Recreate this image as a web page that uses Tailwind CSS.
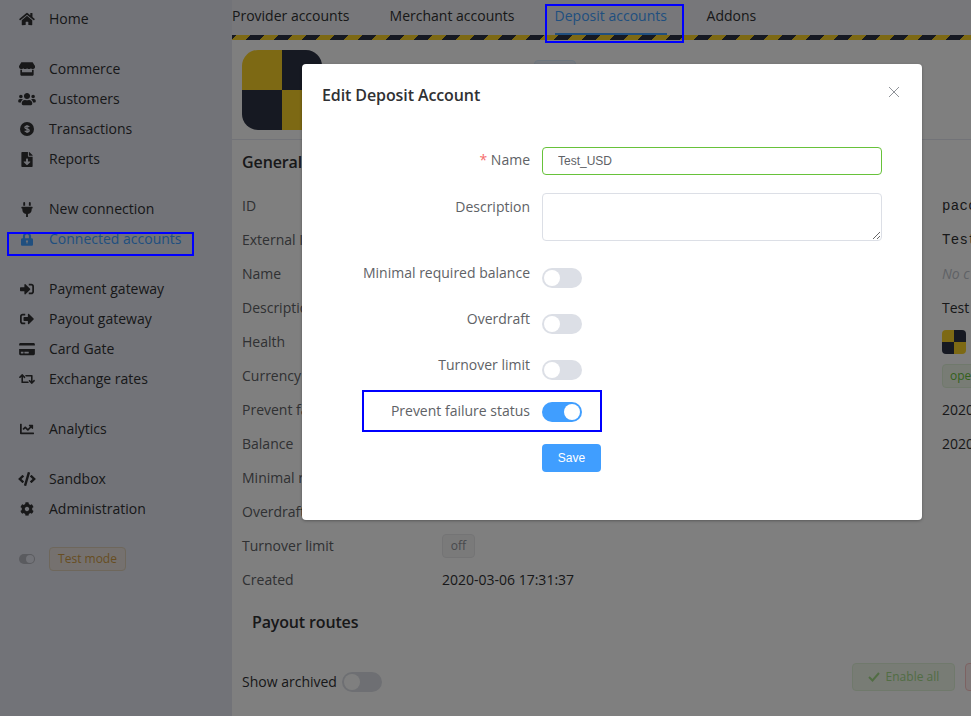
<!DOCTYPE html>
<html lang="en">
<head>
    <meta charset="UTF-8">
    <meta name="viewport" content="width=device-width, initial-scale=1.0">
    <title>Edit Deposit Account</title>
    <script src="https://cdn.jsdelivr.net/npm/@tailwindcss/browser@4"></script>
</head>
<body class="relative h-screen overflow-hidden bg-white font-['Open_Sans',sans-serif] text-sm text-[#606266]">

    <div class="flex h-full">
        <!-- sidebar -->
        <aside class="w-[232px] shrink-0 bg-[#e4e6f0] pt-1 text-[#303133]">
            <a class="flex h-[30px] items-center"><span class="flex w-[49px] justify-center pl-[5px]"><svg class="h-[14px] w-4 fill-current" viewBox="0 0 576 512"><path d="M280.37 148.26L96 300.11V464a16 16 0 0 0 16 16l112.06-.29a16 16 0 0 0 15.92-16V368a16 16 0 0 1 16-16h64a16 16 0 0 1 16 16v95.64a16 16 0 0 0 16 16.05L464 480a16 16 0 0 0 16-16V300L295.67 148.26a12.19 12.19 0 0 0-15.3 0zM571.6 251.47L488 182.56V44.05a12 12 0 0 0-12-12h-56a12 12 0 0 0-12 12v72.61L318.47 43a48 48 0 0 0-61 0L4.34 251.47a12 12 0 0 0-1.6 16.9l25.5 31A12 12 0 0 0 45.15 301l235.22-193.74a12.19 12.19 0 0 1 15.3 0L530.9 301a12 12 0 0 0 16.9-1.6l25.5-31a12 12 0 0 0-1.7-16.93z"/></svg></span>Home</a>

            <a class="mt-5 flex h-[30px] items-center"><span class="flex w-[49px] justify-center pl-[5px]"><svg class="h-[14px] w-4 fill-current" viewBox="0 0 616 512"><path d="M602 118.6L537.1 15C531.3 5.7 521 0 510 0H106C95 0 84.7 5.7 78.9 15L14 118.6c-33.9 54.1-3.9 129.3 59.4 137.9 4.6.6 9.2.9 13.7.9 29.9 0 56.4-13.1 74.6-33.4 18.2 20.3 44.8 33.4 74.6 33.4 29.9 0 56.4-13.1 74.6-33.4 18.2 20.3 44.8 33.4 74.6 33.4 29.9 0 56.4-13.1 74.6-33.4 18.3 20.3 44.8 33.4 74.6 33.4 4.6 0 9.1-.3 13.7-.9 63.5-8.5 93.6-83.7 59.6-137.9zM529.5 288c-10 0-19.9-1.5-29.5-3.8V384H116v-99.8c-9.6 2.2-19.5 3.8-29.5 3.8-6 0-12.1-.4-18-1.2-5.6-.8-11.1-2.1-16.4-3.6V480c0 17.7 14.3 32 32 32h448c17.7 0 32-14.3 32-32V283.2c-5.4 1.6-10.8 2.9-16.4 3.6-6.1.8-12.1 1.2-18.2 1.2z"/></svg></span>Commerce</a>
            <a class="flex h-[30px] items-center"><span class="flex w-[49px] justify-center pl-[5px]"><svg class="h-[14px] w-[18px] fill-current" viewBox="0 0 640 512"><path d="M96 224c35.3 0 64-28.7 64-64s-28.7-64-64-64-64 28.7-64 64 28.7 64 64 64zm448 0c35.3 0 64-28.7 64-64s-28.7-64-64-64-64 28.7-64 64 28.7 64 64 64zm32 32h-64c-17.6 0-33.5 7.1-45.1 18.6 40.3 22.1 68.9 62 75.1 109.4h66c17.7 0 32-14.3 32-32v-32c0-35.3-28.7-64-64-64zm-256 0c61.9 0 112-50.1 112-112S381.9 32 320 32 208 82.1 208 144s50.1 112 112 112zm76.8 32h-8.3c-20.8 10-43.9 16-68.5 16s-47.6-6-68.5-16h-8.3C179.6 288 128 339.6 128 403.2V432c0 26.5 21.5 48 48 48h288c26.5 0 48-21.5 48-48v-28.8c0-63.6-51.6-115.2-115.2-115.2zm-223.7-13.4C161.5 263.1 145.6 256 128 256H64c-35.3 0-64 28.7-64 64v32c0 17.7 14.3 32 32 32h65.9c6.3-47.4 34.9-87.3 75.2-109.4z"/></svg></span>Customers</a>
            <a class="flex h-[30px] items-center"><span class="flex w-[49px] justify-center pl-[5px]"><svg class="h-[14px] w-[14px]" viewBox="0 0 14 14"><circle class="fill-current" cx="7" cy="7" r="7"/><path d="M9.2 5.1C8.9 4.4 8.1 4.1 7 4.1c-1.2 0-2.1.5-2.1 1.4 0 2 4.3 1 4.3 3 0 .9-.9 1.4-2.2 1.4-1.1 0-1.9-.4-2.2-1.1M7 2.9v8.2" fill="none" stroke="#e4e6f0" stroke-width="1.3"/></svg></span>Transactions</a>
            <a class="flex h-[30px] items-center"><span class="flex w-[49px] justify-center pl-[5px]"><svg class="h-[15px] w-3 fill-current" viewBox="0 0 384 512"><path d="M224 136V0H24C10.7 0 0 10.7 0 24v464c0 13.3 10.7 24 24 24h336c13.3 0 24-10.7 24-24V160H248c-13.2 0-24-10.8-24-24zm76.45 211.36l-96.42 95.7c-6.65 6.61-17.39 6.61-24.04 0l-96.42-95.7C73.42 337.29 80.54 320 94.82 320H160v-80c0-8.84 7.16-16 16-16h32c8.84 0 16 7.16 16 16v80h65.18c14.28 0 21.4 17.29 11.27 27.36zM377 105L279.1 7c-4.5-4.5-10.6-7-17-7H256v128h128v-6.1c0-6.3-2.5-12.4-7-16.9z"/></svg></span>Reports</a>

            <a class="mt-5 flex h-[30px] items-center"><span class="flex w-[49px] justify-center pl-[5px]"><svg class="h-[15px] w-3 fill-current" viewBox="0 0 384 512"><path d="M320,32a32,32,0,0,0-64,0v96h64Zm48,128H16A16,16,0,0,0,0,176v32a16,16,0,0,0,16,16H32v32A160.07,160.07,0,0,0,160,412.8V512h64V412.8A160.07,160.07,0,0,0,352,256V224h16a16,16,0,0,0,16-16V176A16,16,0,0,0,368,160ZM128,32a32,32,0,0,0-64,0v96h64Z"/></svg></span>New connection</a>
            <a class="flex h-[30px] items-center text-[#409eff]"><span class="flex w-[49px] justify-center pl-[5px]"><svg class="h-[14px] w-3 fill-current" viewBox="0 0 448 512"><path fill-rule="evenodd" d="M400 224h-24v-72C376 68.2 307.8 0 224 0S72 68.2 72 152v72H48c-26.5 0-48 21.5-48 48v192c0 26.5 21.5 48 48 48h352c26.5 0 48-21.5 48-48V272c0-26.5-21.5-48-48-48zm-104 0H152v-72c0-39.7 32.3-72 72-72s72 32.3 72 72v72zM224 300a40 40 0 0 0-20 74.6V420h40v-45.4A40 40 0 0 0 224 300z"/></svg></span>Connected accounts</a>

            <a class="mt-5 flex h-[30px] items-center"><span class="flex w-[49px] justify-center pl-[5px]"><svg class="h-[14px] w-[14px] fill-current" viewBox="0 0 512 512"><path d="M416 448h-84c-6.6 0-12-5.4-12-12v-40c0-6.6 5.4-12 12-12h84c17.7 0 32-14.3 32-32V160c0-17.7-14.3-32-32-32h-84c-6.6 0-12-5.4-12-12V76c0-6.6 5.4-12 12-12h84c53 0 96 43 96 96v192c0 53-43 96-96 96zm-47-201L201 79c-15-15-41-4.5-41 17v96H24c-13.3 0-24 10.7-24 24v96c0 13.3 10.7 24 24 24h136v96c0 21.5 26 32 41 17l168-168c9.3-9.4 9.3-24.6 0-34z"/></svg></span>Payment gateway</a>
            <a class="flex h-[30px] items-center"><span class="flex w-[49px] justify-center pl-[5px]"><svg class="h-[14px] w-[14px] fill-current" viewBox="0 0 512 512"><path d="M497 273L329 441c-15 15-41 4.5-41-17v-96H152c-13.3 0-24-10.7-24-24v-96c0-13.3 10.7-24 24-24h136V88c0-21.4 25.9-32 41-17l168 168c9.3 9.4 9.3 24.6 0 34zM192 436v-40c0-6.6-5.4-12-12-12H96c-17.7 0-32-14.3-32-32V160c0-17.7 14.3-32 32-32h84c6.6 0 12-5.4 12-12V76c0-6.6-5.4-12-12-12H96c-53 0-96 43-96 96v192c0 53 43 96 96 96h84c6.6 0 12-5.4 12-12z"/></svg></span>Payout gateway</a>
            <a class="flex h-[30px] items-center"><span class="flex w-[49px] justify-center pl-[5px]"><svg class="h-[14px] w-4 fill-current" viewBox="0 0 576 512"><path d="M0 432c0 26.5 21.5 48 48 48h480c26.5 0 48-21.5 48-48V256H0v176zm192-68c0-6.6 5.4-12 12-12h136c6.6 0 12 5.4 12 12v40c0 6.6-5.4 12-12 12H204c-6.6 0-12-5.4-12-12v-40zm-128 0c0-6.6 5.4-12 12-12h72c6.6 0 12 5.4 12 12v40c0 6.6-5.4 12-12 12H76c-6.6 0-12-5.4-12-12v-40zM576 80v48H0V80c0-26.5 21.5-48 48-48h480c26.5 0 48 21.5 48 48z"/></svg></span>Card Gate</a>
            <a class="flex h-[30px] items-center"><span class="flex w-[49px] justify-center pl-[5px]"><svg class="h-[14px] w-4 fill-current" viewBox="0 0 640 512"><path d="M629.657 343.598L528.971 444.284c-9.373 9.372-24.568 9.372-33.941 0L394.343 343.598c-9.373-9.373-9.373-24.569 0-33.941l10.823-10.823c9.562-9.562 25.133-9.34 34.419.492L480 342.118V160H292.451a24.005 24.005 0 0 1-16.971-7.029l-16-16C244.361 121.851 255.069 96 276.451 96H520c13.255 0 24 10.745 24 24v222.118l40.416-43.792c9.285-9.831 24.856-10.054 34.419-.492l10.823 10.823c9.372 9.372 9.372 24.569-.001 33.941zm-265.138 15.431A23.999 23.999 0 0 0 347.548 352H160V169.881l40.416 43.792c9.286 9.831 24.856 10.054 34.419.491l10.822-10.822c9.373-9.373 9.373-24.569 0-33.941L144.971 67.716c-9.373-9.373-24.569-9.373-33.941 0L10.343 168.402c-9.373 9.373-9.373 24.569 0 33.941l10.822 10.822c9.562 9.562 25.133 9.34 34.419-.491L96 169.881V392c0 13.255 10.745 24 24 24h243.549c21.382 0 32.09-25.851 16.971-40.971l-16.001-16z"/></svg></span>Exchange rates</a>

            <a class="mt-5 flex h-[30px] items-center"><span class="flex w-[49px] justify-center pl-[5px]"><svg class="h-[14px] w-[14px] fill-current" viewBox="0 0 512 512"><path d="M496 384H64V80c0-8.84-7.16-16-16-16H16C7.16 64 0 71.16 0 80v336c0 17.67 14.33 32 32 32h464c8.84 0 16-7.16 16-16v-32c0-8.84-7.16-16-16-16zM464 96H345.94c-21.38 0-32.09 25.85-16.97 40.97l32.4 32.4L288 242.75l-73.37-73.37c-12.5-12.5-32.76-12.5-45.25 0l-68.69 68.69c-6.25 6.25-6.25 16.38 0 22.63l22.62 22.62c6.25 6.25 16.38 6.25 22.63 0L192 237.25l73.37 73.37c12.5 12.5 32.76 12.5 45.25 0l96-96 32.4 32.4c15.12 15.12 40.97 4.41 40.97-16.97V112c.01-8.84-7.15-16-15.99-16z"/></svg></span>Analytics</a>

            <a class="mt-5 flex h-[30px] items-center"><span class="flex w-[49px] justify-center pl-[5px]"><svg class="h-[14px] w-[18px] fill-current" viewBox="0 0 640 512"><path d="M278.9 511.5l-61-17.7c-6.4-1.8-10-8.5-8.2-14.9L346.2 8.7c1.8-6.4 8.5-10 14.9-8.2l61 17.7c6.4 1.8 10 8.5 8.2 14.9L293.8 503.3c-1.9 6.4-8.5 10.1-14.9 8.2zm-114-112.2l43.5-46.4c4.6-4.9 4.3-12.7-.8-17.2L117 256l90.6-79.7c5.1-4.5 5.5-12.3.8-17.2l-43.5-46.4c-4.5-4.8-12.1-5.1-17-.5L3.8 247.2c-5.1 4.7-5.1 12.8 0 17.5l144.1 135.1c4.9 4.6 12.5 4.4 17-.5zm327.2.6l144.1-135.1c5.1-4.7 5.1-12.8 0-17.5L492.1 112.1c-4.8-4.5-12.4-4.3-17 .5L431.6 159c-4.6 4.9-4.3 12.7.8 17.2L523 256l-90.6 79.7c-5.1 4.5-5.5 12.3-.8 17.2l43.5 46.4c4.5 4.9 12.1 5.1 17 .6z"/></svg></span>Sandbox</a>
            <a class="flex h-[30px] items-center"><span class="flex w-[49px] justify-center pl-[5px]"><svg class="h-[14px] w-[14px] fill-current" viewBox="0 0 512 512"><path d="M487.4 315.7l-42.6-24.6c4.3-23.2 4.3-47 0-70.2l42.6-24.6c4.9-2.8 7.1-8.6 5.5-14-11.1-35.6-30-67.8-54.7-94.6-3.8-4.1-10-5.1-14.8-2.3L380.8 110c-17.9-15.4-38.5-27.3-60.8-35.1V25.8c0-5.6-3.9-10.5-9.4-11.7-36.7-8.2-74.3-7.8-109.2 0-5.5 1.2-9.4 6.1-9.4 11.7V75c-22.2 7.9-42.8 19.8-60.8 35.1L88.7 85.5c-4.9-2.8-11-1.9-14.8 2.3-24.7 26.7-43.6 58.9-54.7 94.6-1.7 5.4.6 11.2 5.5 14L67.3 221c-4.3 23.2-4.3 47 0 70.2l-42.6 24.6c-4.9 2.8-7.1 8.6-5.5 14 11.1 35.6 30 67.8 54.7 94.6 3.8 4.1 10 5.1 14.8 2.3l42.6-24.6c17.9 15.4 38.5 27.3 60.8 35.1v49.2c0 5.6 3.9 10.5 9.4 11.7 36.7 8.2 74.3 7.8 109.2 0 5.5-1.2 9.4-6.1 9.4-11.7v-49.2c22.2-7.9 42.8-19.8 60.8-35.1l42.6 24.6c4.9 2.8 11 1.9 14.8-2.3 24.7-26.7 43.6-58.9 54.7-94.6 1.5-5.5-.7-11.3-5.6-14.1zM256 336c-44.1 0-80-35.9-80-80s35.9-80 80-80 80 35.9 80 80-35.9 80-80 80z"/></svg></span>Administration</a>

            <div class="mt-5 flex h-[30px] items-center">
                <span class="flex w-[49px] justify-center pl-[5px]"><span class="flex h-[10px] w-4 items-center justify-end rounded-full bg-[#b4b6be] pr-px"><span class="h-2 w-2 rounded-full bg-[#e4e6f0]"></span></span></span>
                <span class="flex h-6 w-[77px] items-center justify-center rounded border border-[#dccfb8] bg-[#eae3de] text-xs text-[#cf9b45]">Test mode</span>
            </div>
        </aside>

        <!-- main -->
        <main class="min-w-0 flex-1 overflow-hidden">
            <nav class="flex h-[35px] bg-[#eeeff4] text-[#303133]">
                <a class="w-[157.6px] pt-[6px]">Provider accounts</a>
                <a class="w-[165px] pt-[6px]">Merchant accounts</a>
                <a class="w-[152px] pt-[6px] text-[#409eff]"><span class="inline-block h-[29px] border-b-2 border-[#409eff]">Deposit accounts</span></a>
                <a class="pt-[6px]">Addons</a>
            </nav>
            <div class="h-[5px] bg-[repeating-linear-gradient(135deg,#2c3244_0,#2c3244_3.4px,#fad228_3.4px,#fad228_13.4px,#2c3244_13.4px,#2c3244_19.8px)]"></div>

            <header class="flex h-[100px] items-start border-b border-[#e4e6f0] pt-[10px] pl-[10px]">
                <div class="grid h-20 w-20 grid-cols-2 grid-rows-2 overflow-hidden rounded-2xl">
                    <span class="bg-[#fad228]"></span><span class="bg-[#2c3244]"></span>
                    <span class="bg-[#2c3244]"></span><span class="bg-[#fad228]"></span>
                </div>
                <span class="mt-[10px] ml-[212px] h-6 w-[42px] rounded border border-[#d9ecff] bg-[#ecf5ff]"></span>
            </header>

            <section class="w-[900px] pl-[10px]">
                <h2 class="mb-[6px] flex h-[43px] items-center text-base font-semibold tracking-[-0.1px] text-[#303133]">General</h2>
                <div class="grid grid-cols-[200px_500px_auto] auto-rows-[34px] items-center whitespace-nowrap">
                    <span>ID</span><span></span><span class="font-['Liberation_Mono',monospace] tracking-wide text-[#303133]">pacc</span>
                    <span>External ID</span><span></span><span class="font-['Liberation_Mono',monospace] tracking-wide text-[#303133]">Test</span>
                    <span>Name</span><span></span><span class="text-[#c0c4cc] italic">No c</span>
                    <span>Description</span><span></span><span class="text-[#303133]">Test</span>
                    <span>Health</span><span></span><span class="grid h-6 w-6 grid-cols-2 grid-rows-2 overflow-hidden rounded"><i class="bg-[#fad228]"></i><i class="bg-[#2c3244]"></i><i class="bg-[#2c3244]"></i><i class="bg-[#fad228]"></i></span>
                    <span>Currency</span><span></span><span class="flex h-6 w-[60px] items-center rounded border border-[#e1f3d8] bg-[#f0f9eb] pl-[7px] text-xs font-medium text-[#67c23a]">open</span>
                    <span>Prevent failure status</span><span></span><span class="text-[#303133]">2020</span>
                    <span>Balance</span><span></span><span class="text-[#303133]">2020</span>
                    <span>Minimal required balance</span><span></span><span></span>
                    <span>Overdraft</span><span></span><span></span>
                    <span>Turnover limit</span><span><span class="flex h-6 w-[33px] items-center justify-center rounded border border-[#e9e9eb] bg-[#f4f4f5] text-xs text-[#909399]">off</span></span><span></span>
                    <span>Created</span><span class="text-[#303133]">2020-03-06 17:31:37</span><span></span>
                </div>
                <h2 class="mt-2 flex h-[34px] items-center pl-[10px] text-base font-semibold tracking-[-0.15px] text-[#303133]">Payout routes</h2>
                <div class="mt-6 flex h-7 items-start whitespace-nowrap text-[#303133]">
                    <span class="mt-[9px] leading-5">Show archived</span>
                    <span class="mt-[9px] ml-[5px] flex h-5 w-10 rounded-full bg-[#dcdfe6] p-[2px]"><span class="h-4 w-4 rounded-full bg-white"></span></span>
                    <button class="ml-[470px] flex h-7 w-[103px] items-center justify-center gap-1.5 rounded border border-[#e1f3d8] bg-[#f0f9eb] text-xs text-[#a4da89]"><svg class="h-[10px] w-[12px]" viewBox="0 0 12 10" fill="none" stroke="currentColor" stroke-width="2"><path d="M1 5l3.5 3.5L11 1"/></svg>Enable all</button>
                    <button class="ml-[10px] h-7 w-[60px] shrink-0 rounded border border-[#fbc4c4] bg-[#fef0f0]"></button>
                </div>
            </section>
        </main>
    </div>

    <!-- mask -->
    <div class="absolute inset-0 bg-black/50"></div>

    <!-- dialog -->
    <div class="absolute top-16 left-[302px] h-[456px] w-[620px] rounded-sm bg-white shadow-[0_1px_3px_rgba(0,0,0,0.3)]">
        <div class="relative flex h-[83px] items-start px-5 pt-[18px]">
            <h3 class="text-base leading-[26px] font-semibold tracking-[-0.1px] text-[#303133]">Edit Deposit Account</h3>
            <svg class="absolute top-[23px] right-[23px] h-[10px] w-[10px]" viewBox="0 0 10 10" fill="none" stroke="#909399" stroke-width="1"><path d="M0 0l10 10M10 0L0 10"/></svg>
        </div>
        <form class="flex flex-col gap-[18px]">
            <div class="flex h-7">
                <label class="w-[240px] pr-3 text-right leading-[26px]"><span class="text-[#f56c6c]">*</span> Name</label>
                <input type="text" value="Test_USD" class="h-7 w-[340px] rounded border border-[#67c23a] px-[15px] font-['Liberation_Sans',sans-serif] text-xs text-[#606266] outline-none">
            </div>
            <div class="flex">
                <label class="w-[240px] pr-3 text-right leading-7">Description</label>
                <textarea class="block h-12 w-[340px] rounded border border-[#dcdfe6] outline-none"></textarea>
            </div>
            <div class="flex h-7">
                <label class="w-[240px] pr-3 text-right leading-7">Minimal required balance</label>
                <span class="mt-[9px] flex h-5 w-10 rounded-full bg-[#dcdfe6] p-[2px]"><span class="h-4 w-4 rounded-full bg-white"></span></span>
            </div>
            <div class="flex h-7">
                <label class="w-[240px] pr-3 text-right leading-7">Overdraft</label>
                <span class="mt-[9px] flex h-5 w-10 rounded-full bg-[#dcdfe6] p-[2px]"><span class="h-4 w-4 rounded-full bg-white"></span></span>
            </div>
            <div class="flex h-7">
                <label class="w-[240px] pr-3 text-right leading-7">Turnover limit</label>
                <span class="mt-[9px] flex h-5 w-10 rounded-full bg-[#dcdfe6] p-[2px]"><span class="h-4 w-4 rounded-full bg-white"></span></span>
            </div>
            <div class="flex h-7">
                <label class="w-[240px] pr-3 text-right leading-7">Prevent failure status</label>
                <span class="mt-[5px] flex h-5 w-10 justify-end rounded-full bg-[#409eff] p-[2px]"><span class="h-4 w-4 rounded-full bg-white"></span></span>
            </div>
            <div class="pl-[240px]">
                <button type="button" class="mt-px block h-7 w-[59px] rounded bg-[#409eff] font-['Liberation_Sans',sans-serif] text-xs text-white">Save</button>
            </div>
        </form>
    </div>

    <!-- highlight boxes -->
    <div class="absolute top-[232px] left-[7px] h-6 w-[187px] border-2 border-[#0000ff]"></div>
    <div class="absolute top-1 left-[545px] h-[39px] w-[139px] border-2 border-[#0000ff]"></div>
    <div class="absolute top-[390px] left-[362px] h-[42px] w-[240px] border-2 border-[#0000ff]"></div>

</body>
</html>
